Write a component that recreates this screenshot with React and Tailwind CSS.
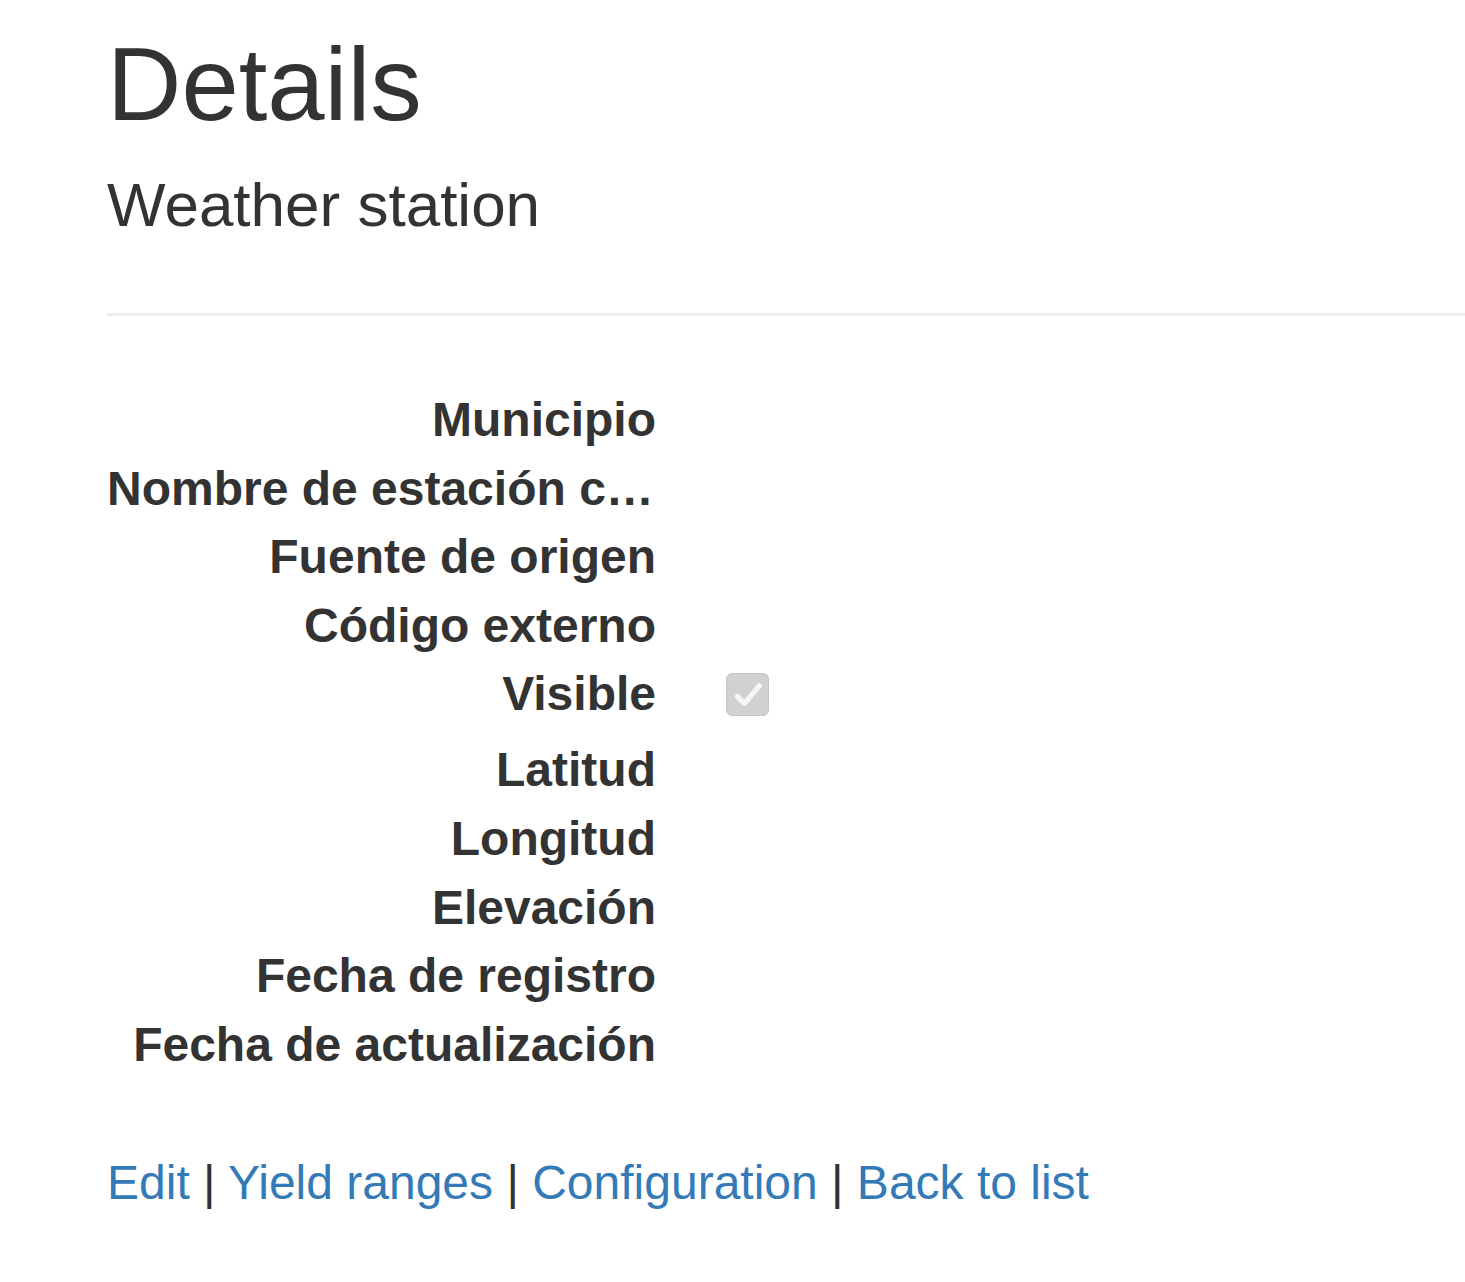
const fields = [
  'Municipio',
  'Nombre de estación climatológica',
  'Fuente de origen',
  'Código externo',
  'Visible',
  'Latitud',
  'Longitud',
  'Elevación',
  'Fecha de registro',
  'Fecha de actualización',
];

const links = ['Edit', 'Yield ranges', 'Configuration', 'Back to list'];

function DisabledCheck() {
  return (
    <span className="mt-[13px] ml-[2px] flex h-[43px] w-[43px] items-center justify-center rounded-[6px] border border-[#c4c4c4] bg-[#d1d1d1]">
      <svg viewBox="0 0 24 24" className="h-[34px] w-[34px]" fill="none">
        <path
          d="M4.5 13l5 5L20 5.5"
          stroke="#f6f6f6"
          strokeWidth="3.6"
          strokeLinecap="round"
          strokeLinejoin="round"
        />
      </svg>
    </span>
  );
}

export default function App() {
  return (
    <div className="min-h-[1282px] bg-white pl-[107px] pt-[28px] text-[#333] [font-family:'Liberation_Sans',Arial,sans-serif]">
      <h2 className="text-[103px] leading-[113px] font-normal">Details</h2>

      <div>
        <h4 className="mt-[30px] text-[62px] leading-[68px] font-normal">
          Weather station
        </h4>
        <hr className="mt-[74px] border-t-[3px] border-[#eeeeee]" />

        {/* dl-horizontal */}
        <dl className="mt-[70px] flex flex-col">
          {fields.map((f) => (
            <div
              key={f}
              className={`flex ${f === 'Visible' ? 'h-[76px]' : 'h-[68.6px]'}`}
            >
              <dt className="w-[549px] shrink-0 truncate text-right text-[48px] leading-[68.6px] font-bold">
                {f}
              </dt>
              <dd className="ml-[68px]">{f === 'Visible' && <DisabledCheck />}</dd>
            </div>
          ))}
        </dl>

        <p className="mt-[70px] text-[48px] leading-[68.6px]">
          {links.map((l, i) => (
            <span key={l}>
              {i > 0 && ' | '}
              <a href="#" className="text-[#337ab7]">
                {l}
              </a>
            </span>
          ))}
        </p>
      </div>
    </div>
  );
}
